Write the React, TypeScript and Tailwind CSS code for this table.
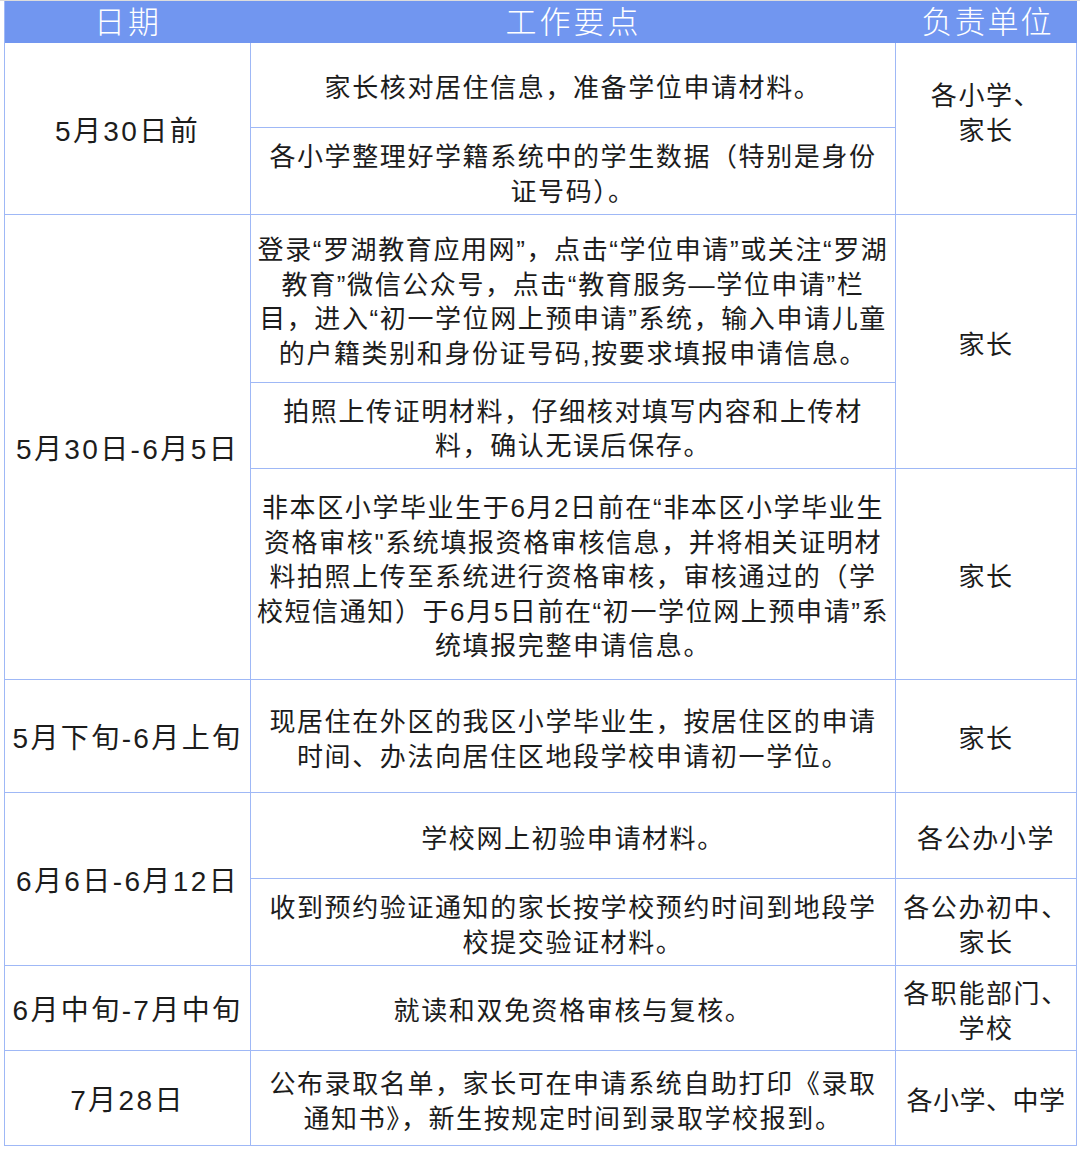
import React from "react";

const font = { fontFamily: '"Liberation Sans", "Noto Sans CJK SC", sans-serif' };

function Cell({ lines, cls = "" }: { lines: string[]; cls?: string }) {
  return (
    <div
      className={`flex flex-col items-center justify-center border-r border-b border-[#9fb8f6] leading-[34.5px] text-[#1c1c1c] text-center ${cls}`}
    >
      {lines.map((l, i) => (
        <div key={i} className="whitespace-nowrap">
          {l}
        </div>
      ))}
    </div>
  );
}

const txt = "pt-[7px] text-[26px] tracking-[1.6px]";
const date = "pt-[7px] text-[28px] tracking-[2.4px]";

export default function App() {
  return (
    <div className="w-[1080px] h-[1152px] bg-white border-t border-[#dcdcdc] pl-[4px]" style={font}>
      <div className="grid grid-cols-[246px_645px_181px] grid-rows-[42px_85px_87px_168px_86px_211px_113px_86px_87px_85px_95px] border-l border-[#9fb8f6] w-[1072px]">
        <div className="bg-[#7196f0] flex items-center justify-center pt-[2px] text-white text-[31px] tracking-[3px] font-light">日期</div>
        <div className="bg-[#7196f0] flex items-center justify-center pt-[2px] text-white text-[31px] tracking-[3px] font-light">工作要点</div>
        <div className="bg-[#7196f0] flex items-center justify-center pt-[2px] text-white text-[31px] tracking-[2px] font-light pl-[2px]">负责单位</div>

        <Cell cls={`row-span-2 ${date}`} lines={["5月30日前"]} />
        <Cell cls={txt} lines={["家长核对居住信息，准备学位申请材料。"]} />
        <Cell cls="row-span-2 pb-[30px] text-[26px] tracking-[1.6px]" lines={["各小学、", "家长"]} />
        <Cell cls={txt} lines={["各小学整理好学籍系统中的学生数据（特别是身份", "证号码）。"]} />

        <Cell cls={`row-span-3 ${date}`} lines={["5月30日-6月5日"]} />
        <Cell
          cls={txt}
          lines={[
            "登录“罗湖教育应用网”，点击“学位申请”或关注“罗湖",
            "教育”微信公众号，点击“教育服务—学位申请”栏",
            "目，进入“初一学位网上预申请”系统，输入申请儿童",
            "的户籍类别和身份证号码,按要求填报申请信息。",
          ]}
        />
        <Cell cls={`row-span-2 ${txt}`} lines={["家长"]} />
        <Cell cls={txt} lines={["拍照上传证明材料，仔细核对填写内容和上传材", "料，确认无误后保存。"]} />
        <Cell
          cls={txt}
          lines={[
            "非本区小学毕业生于6月2日前在“非本区小学毕业生",
            "资格审核\"系统填报资格审核信息，并将相关证明材",
            "料拍照上传至系统进行资格审核，审核通过的（学",
            "校短信通知）于6月5日前在“初一学位网上预申请”系",
            "统填报完整申请信息。",
          ]}
        />
        <Cell cls={txt} lines={["家长"]} />

        <Cell cls={date} lines={["5月下旬-6月上旬"]} />
        <Cell cls={txt} lines={["现居住在外区的我区小学毕业生，按居住区的申请", "时间、办法向居住区地段学校申请初一学位。"]} />
        <Cell cls={txt} lines={["家长"]} />

        <Cell cls={`row-span-2 ${date}`} lines={["6月6日-6月12日"]} />
        <Cell cls={txt} lines={["学校网上初验申请材料。"]} />
        <Cell cls={txt} lines={["各公办小学"]} />
        <Cell cls={txt} lines={["收到预约验证通知的家长按学校预约时间到地段学", "校提交验证材料。"]} />
        <Cell cls={txt} lines={["各公办初中、", "家长"]} />

        <Cell cls={date} lines={["6月中旬-7月中旬"]} />
        <Cell cls={txt} lines={["就读和双免资格审核与复核。"]} />
        <Cell cls={txt} lines={["各职能部门、", "学校"]} />

        <Cell cls={date} lines={["7月28日"]} />
        <Cell cls={txt} lines={["公布录取名单，家长可在申请系统自助打印《录取", "通知书》，新生按规定时间到录取学校报到。"]} />
        <Cell cls="pt-[7px] text-[26px] tracking-[0.5px]" lines={["各小学、中学"]} />
      </div>
    </div>
  );
}
